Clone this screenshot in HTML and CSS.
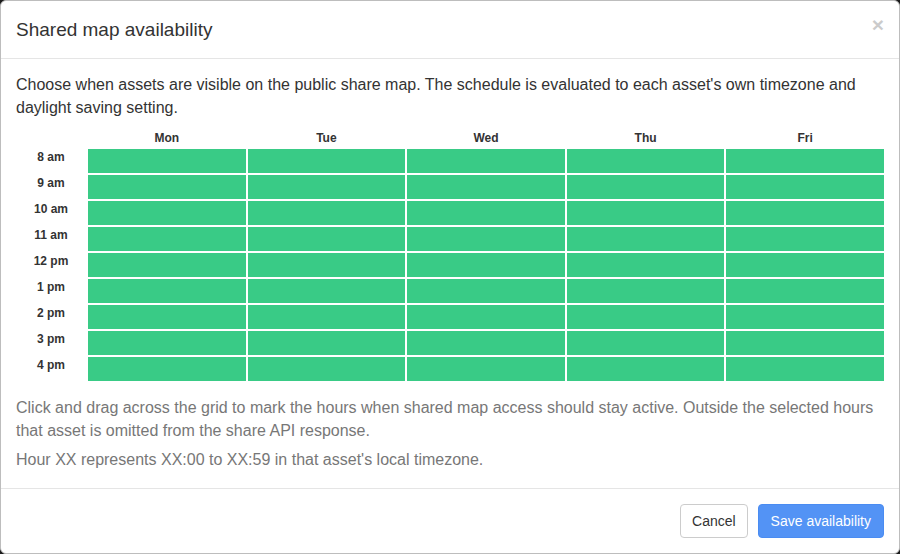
FILE: index.html
```html
<!DOCTYPE html>
<html lang="en">
  <head>
    <meta charset="UTF-8" />
    <meta name="viewport" content="width=device-width, initial-scale=1.0" />
    <title>Shared map availability</title>
    <link rel="stylesheet" href="styles.css">
  </head>
  <body>
    <div class="modal">
      <div class="modal-header">
        <h4 class="modal-title">Shared map availability</h4>
        <button class="close" type="button">&times;</button>
      </div>

      <div class="modal-body">
        <p class="intro">
          Choose when assets are visible on the public share map. The schedule is evaluated to each asset's own timezone and daylight saving setting.
        </p>

        <div class="schedule" id="schedule">
          <!-- filled in by the script below -->
        </div>

        <p class="help help-first">
          Click and drag across the grid to mark the hours when shared map access should stay active. Outside the selected hours that asset is omitted from the share API response.
        </p>
        <p class="help">Hour XX represents XX:00 to XX:59 in that asset's local timezone.</p>
      </div>

      <div class="modal-footer">
        <button class="btn btn-default" type="button">Cancel</button>
        <button class="btn btn-primary" type="button">Save availability</button>
      </div>
    </div>

    <script>
      const days = ["Mon", "Tue", "Wed", "Thu", "Fri"];
      const hours = ["8 am", "9 am", "10 am", "11 am", "12 pm", "1 pm", "2 pm", "3 pm", "4 pm"];

      function buildSchedule() {
        const grid = document.getElementById("schedule");
        let html = '<div class="corner"></div>';
        days.forEach(function (day) {
          html += `<div class="day">${day}</div>`;
        });
        hours.forEach(function (hour) {
          html += `<div class="hour">${hour}</div>`;
          days.forEach(function () {
            html += '<div class="slot active"></div>';
          });
        });
        grid.innerHTML = html;
      }

      buildSchedule();
    </script>
  </body>
</html>
```

FILE: styles.css
```css
html {
  background-color: #1c1c1c;
}
body {
  margin: 0;
  font-family: "Liberation Sans", Arial, Helvetica, sans-serif;
  font-size: 16px;
  line-height: 1.42857;
  color: #333;
}
.modal {
  height: 100vh;
  box-sizing: border-box;
  display: flex;
  flex-direction: column;
  background: white;
  border: 1px solid #bdbdbd;
  border-radius: 6px;
  overflow: hidden;
}
.modal-header {
  display: flex;
  align-items: flex-start;
  padding: 15px 15px 14px;
  border-bottom: 1px solid #e5e5e5;
}
.modal-title {
  flex: 1;
  margin: 0;
  font-size: 19px;
  font-weight: normal;
  line-height: 28px;
}
.close {
  margin-top: -2px;
  padding: 0;
  background: none;
  border: none;
  font-family: inherit;
  font-size: 21px;
  font-weight: bold;
  line-height: 21px;
  color: #000;
  opacity: 0.2;
  cursor: pointer;
}
.modal-body {
  flex: 1;
  padding: 15px 15px 0;
}
.intro {
  margin: 0 0 7px;
}
.schedule {
  display: grid;
  grid-template-columns: 70px repeat(5, 1fr);
  grid-template-rows: 20px repeat(9, 24px);
  gap: 2px;
  font-size: 12px;
  font-weight: bold;
}
.day {
  text-align: center;
  line-height: 22px;
}
.hour {
  text-align: center;
  line-height: 16px;
}
.slot {
  background-color: #e9ecef;
  cursor: pointer;
}
.slot.active {
  background-color: #39cb86;
}
.help {
  margin: 0;
  color: #777;
}
.help-first {
  margin: 16px 0 7px;
}
.modal-footer {
  display: flex;
  justify-content: flex-end;
  gap: 10px;
  padding: 15px;
  border-top: 1px solid #e5e5e5;
}
.btn {
  padding: 6px 12px;
  font-family: inherit;
  font-size: 14px;
  line-height: 20px;
  border: 1px solid transparent;
  border-radius: 4px;
  cursor: pointer;
}
.btn-default {
  padding: 6px 11px;
  color: #333;
  background-color: white;
  border-color: #ccc;
}
.btn-primary {
  color: white;
  background-color: #5393f5;
  border-color: #4a8cf2;
}
```
